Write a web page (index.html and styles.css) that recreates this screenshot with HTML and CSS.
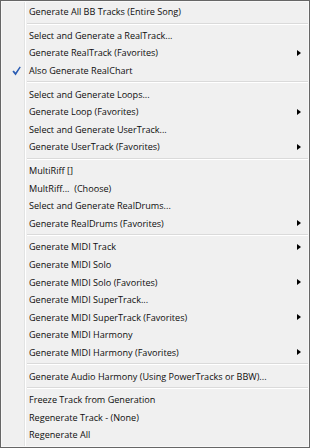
FILE: index.html
```html
<!DOCTYPE html>
<html lang="en">

<head>
    <meta charset="UTF-8">
    <title>Generate Menu</title>
    <link rel="stylesheet" href="styles.css">
</head>

<body>

    <div class="menu">
        <div class="item"><span class="gutter"></span><span class="label">Generate All BB Tracks (Entire Song)</span></div>
        <div class="separator"></div>
        <div class="item"><span class="gutter"></span><span class="label">Select and Generate a RealTrack...</span></div>
        <div class="item"><span class="gutter"></span><span class="label">Generate RealTrack (Favorites)</span><span class="arrow"></span></div>
        <div class="item">
            <span class="gutter">
                <svg class="check" width="9" height="10" viewBox="0 0 9 10">
                    <path d="M0.4 5.6 L1.8 4.4 L3.5 6.6 L7.7 0.4 L8.8 1.3 L3.6 9.6 Z" fill="#2a5cb3" />
                </svg>
            </span>
            <span class="label">Also Generate RealChart</span>
        </div>
        <div class="separator"></div>
        <div class="item"><span class="gutter"></span><span class="label">Select and Generate Loops...</span></div>
        <div class="item"><span class="gutter"></span><span class="label">Generate Loop (Favorites)</span><span class="arrow"></span></div>
        <div class="item"><span class="gutter"></span><span class="label">Select and Generate UserTrack...</span></div>
        <div class="item"><span class="gutter"></span><span class="label">Generate UserTrack (Favorites)</span><span class="arrow"></span></div>
        <div class="separator"></div>
        <div class="item"><span class="gutter"></span><span class="label">MultiRiff []</span></div>
        <div class="item"><span class="gutter"></span><span class="label">MultRiff... &nbsp;(Choose)</span></div>
        <div class="item"><span class="gutter"></span><span class="label">Select and Generate RealDrums...</span></div>
        <div class="item"><span class="gutter"></span><span class="label">Generate RealDrums (Favorites)</span><span class="arrow"></span></div>
        <div class="separator"></div>
        <div class="item"><span class="gutter"></span><span class="label">Generate MIDI Track</span><span class="arrow"></span></div>
        <div class="item"><span class="gutter"></span><span class="label">Generate MIDI Solo</span></div>
        <div class="item"><span class="gutter"></span><span class="label">Generate MIDI Solo (Favorites)</span><span class="arrow"></span></div>
        <div class="item"><span class="gutter"></span><span class="label">Generate MIDI SuperTrack...</span></div>
        <div class="item"><span class="gutter"></span><span class="label">Generate MIDI SuperTrack (Favorites)</span><span class="arrow"></span></div>
        <div class="item"><span class="gutter"></span><span class="label">Generate MIDI Harmony</span></div>
        <div class="item"><span class="gutter"></span><span class="label">Generate MIDI Harmony (Favorites)</span><span class="arrow"></span></div>
        <div class="separator"></div>
        <div class="item"><span class="gutter"></span><span class="label">Generate Audio Harmony (Using PowerTracks or BBW)...</span></div>
        <div class="separator"></div>
        <div class="item"><span class="gutter"></span><span class="label">Freeze Track from Generation</span></div>
        <div class="item"><span class="gutter"></span><span class="label">Regenerate Track - (None)</span></div>
        <div class="item"><span class="gutter"></span><span class="label">Regenerate All</span></div>
    </div>

</body>

</html>
```

FILE: styles.css
```css
body,
html {
    margin: 0;
    padding: 0;
    background-color: #f0f0f0;
}

body {
    font-family: 'Open Sans', sans-serif;
    font-size: 9.1px;
    color: #0d0d0d;
}

.menu {
    box-sizing: border-box;
    width: 310px;
    height: 448px;
    border: 1px solid #666666;
    padding: 2px 1px 3px 2px;
    /* gutter line next to the check column */
    background: linear-gradient(to right, transparent 23px, #e2e3e3 23px, #e2e3e3 24px, #ffffff 24px, #ffffff 25px, transparent 25px), #f0f0f0;
    box-shadow: inset 0 0 0 1px #f8f8f8;
    display: flex;
    flex-direction: column;
}

.item {
    display: flex;
    align-items: center;
    height: 17.6px;
    flex-shrink: 0;
}

.gutter {
    width: 22px;
    height: 100%;
    display: flex;
    align-items: center;
    padding-left: 9px;
    box-sizing: border-box;
}

.label {
    padding-left: 4px;
    white-space: nowrap;
}

.arrow {
    margin-left: auto;
    margin-right: 7px;
    width: 0;
    height: 0;
    border-left: 4px solid #000;
    border-top: 3.5px solid transparent;
    border-bottom: 3.5px solid transparent;
}

.separator {
    height: 6px;
    flex-shrink: 0;
    margin-left: 24px;
    display: flex;
    align-items: center;
}

.separator::before {
    content: "";
    flex: 1;
    height: 1px;
    background-color: #dadada;
    border-bottom: 1px solid #ffffff;
}
```
